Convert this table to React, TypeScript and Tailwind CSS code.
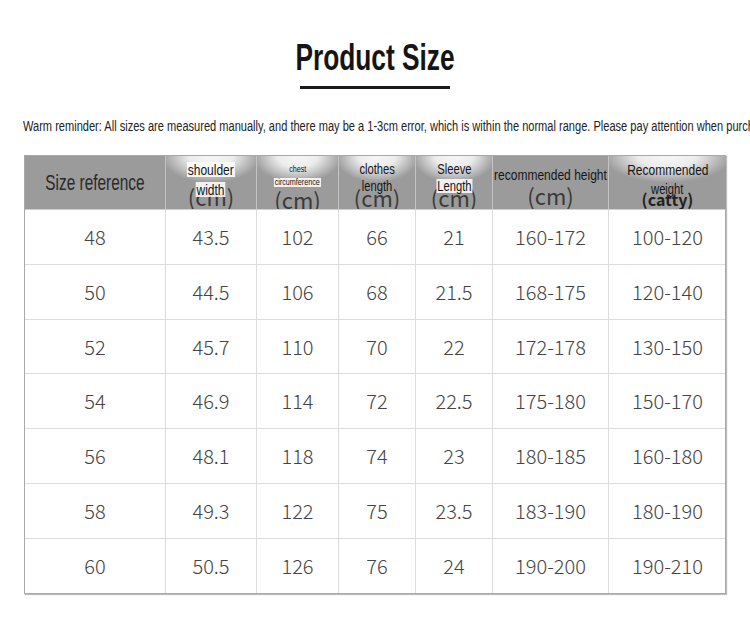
import React from 'react';

const sans = { fontFamily: '"Liberation Sans", Arial, sans-serif' };
const light = { fontFamily: '"Noto Sans CJK SC", "Noto Sans", sans-serif' };

const rows = [
    ['48', '43.5', '102', '66', '21', '160-172', '100-120'],
    ['50', '44.5', '106', '68', '21.5', '168-175', '120-140'],
    ['52', '45.7', '110', '70', '22', '172-178', '130-150'],
    ['54', '46.9', '114', '72', '22.5', '175-180', '150-170'],
    ['56', '48.1', '118', '74', '23', '180-185', '160-180'],
    ['58', '49.3', '122', '75', '23.5', '183-190', '180-190'],
    ['60', '50.5', '126', '76', '24', '190-200', '190-210'],
];

const cols = 'grid grid-cols-[141px_91px_82px_77px_77px_116px_117px]';

const headBg =
    'bg-[#9b9b9b] bg-[radial-gradient(ellipse_55%_50%_at_50%_0%,#f6f6f6_0%,#ececec_45%,transparent_100%)]';

const Cm = ({ className = '' }: { className?: string }) => (
    <span className={`block h-[22px] text-center text-[22px] leading-none text-[#3a3a3a] ${className}`} style={light}>
        (cm)
    </span>
);

// condensed label, white-boxed like the source
const Tag = ({
    children,
    size = 'text-[14px]',
    box = true,
    className = '',
}: {
    children: React.ReactNode;
    size?: string;
    box?: boolean;
    className?: string;
}) => (
    <span className={`flex justify-center leading-none relative z-10 ${className}`}>
        <span
            className={`inline-block whitespace-nowrap scale-x-[0.8] ${size} leading-none text-[#151515] ${
                box ? 'bg-white/85 px-[1px]' : ''
            }`}
            style={sans}
        >
            {children}
        </span>
    </span>
);

export default function App() {
    return (
        <div className="w-[750px] h-[620px] bg-white overflow-hidden">
            {/* Title */}
            <div className="flex flex-col items-center pt-[40px]">
                <h1
                    className="inline-block scale-x-[0.73] text-[36px] font-bold leading-none text-[#151515] whitespace-nowrap"
                    style={sans}
                >
                    Product Size
                </h1>
                <div className="mt-[10px] w-[150px] h-[3px] bg-[#1a1a1a]" />
            </div>

            {/* Reminder */}
            <div className="mt-[24px] pl-[23px] h-[14px] whitespace-nowrap">
                <p className="inline-block origin-left scale-x-[0.79] text-[14px] leading-none text-[#222]" style={sans}>
                    Warm reminder: All sizes are measured manually, and there may be a 1-3cm error, which is within the normal range. Please pay attention when purchasing.
                </p>
            </div>

            {/* Table */}
            <div className="mt-[28px] ml-[24px] w-[702px] border border-[#a8a8a8] shadow-[1px_1px_1px_#bdbdbd]">
                <div className={`${cols} h-[54px] border-b border-[#cfcfcf]`}>
                    <div className="flex items-center justify-center bg-[#9b9b9b] border-r border-[#c4c4c4]">
                        <span className="inline-block scale-x-[0.7] text-[22px] leading-none text-[#2a2a2a] whitespace-nowrap" style={sans}>
                            Size reference
                        </span>
                    </div>
                    <div className={`flex flex-col overflow-hidden pt-[6px] ${headBg} border-r border-[#c4c4c4]`}>
                        <Tag size="text-[15px]">shoulder</Tag>
                        <Tag size="text-[15px]" className="mt-[5px]">width</Tag>
                        <Cm className="-mt-[12px]" />
                    </div>
                    <div className={`flex flex-col overflow-hidden pt-[9px] ${headBg} border-r border-[#c4c4c4]`}>
                        <Tag size="text-[9px]" box={false}>chest</Tag>
                        <Tag size="text-[9px]" className="mt-[4px]">circumference</Tag>
                        <Cm className="mt-[1px]" />
                    </div>
                    <div className={`flex flex-col overflow-hidden pt-[6px] ${headBg} border-r border-[#c4c4c4]`}>
                        <Tag box={false}>clothes</Tag>
                        <Tag box={false} className="mt-[3px]">length</Tag>
                        <Cm className="-mt-[7px]" />
                    </div>
                    <div className={`flex flex-col overflow-hidden pt-[6px] ${headBg} border-r border-[#c4c4c4]`}>
                        <Tag box={false}>Sleeve</Tag>
                        <Tag className="mt-[3px]">Length</Tag>
                        <Cm className="-mt-[7px]" />
                    </div>
                    <div className="flex flex-col overflow-hidden pt-[11px] bg-[#9b9b9b] border-r border-[#c4c4c4]">
                        <Tag size="text-[15px]" box={false}>recommended height</Tag>
                        <Cm className="mt-[2px]" />
                    </div>
                    <div className={`flex flex-col overflow-hidden pt-[6px] ${headBg}`}>
                        <Tag size="text-[15px]" box={false}>Recommended</Tag>
                        <Tag size="text-[14px]" box={false} className="mt-[5px]">weight</Tag>
                        <span className="block -mt-[5px] text-center text-[16px] font-bold leading-none text-[#222]" style={light}>
                            (catty)
                        </span>
                    </div>
                </div>

                {rows.map((r, i) => {
                    const last = i === rows.length - 1;
                    const height = i === 2 || last ? 'h-[54px]' : 'h-[55px]';
                    return (
                        <div key={r[0]} className={`${cols} ${height} ${last ? '' : 'border-b border-[#dcdcdc]'}`}>
                            {r.map((v, j) => (
                                <div
                                    key={j}
                                    className={`flex items-center justify-center text-[20px] font-light text-[#444] ${
                                        j < r.length - 1 ? 'border-r border-[#dcdcdc]' : ''
                                    }`}
                                    style={light}
                                >
                                    {v}
                                </div>
                            ))}
                        </div>
                    );
                })}
            </div>
        </div>
    );
}
